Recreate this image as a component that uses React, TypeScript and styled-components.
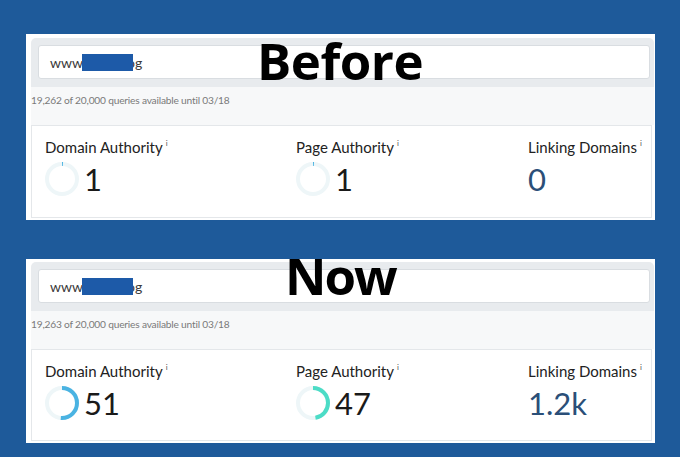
import React from "react";
import styled, { createGlobalStyle } from "styled-components";

const Global = createGlobalStyle`
  html, body { margin: 0; padding: 0; }
  body {
    background: #1e5a9a;
    width: 680px;
    height: 457px;
    overflow: hidden;
    font-family: Lato, "Liberation Sans", sans-serif;
  }
`;

const Page = styled.div`
  display: flex;
  flex-direction: column;
  gap: 39px;
  padding: 34px 25px 0 26px;
`;

const Panel = styled.section<{ $top: number }>`
  position: relative;
  background: #ffffff;
  padding: ${(p) => p.$top}px 1px 2px 5px;
  display: flex;
  flex-direction: column;
`;

const Header = styled.div`
  background: #e8ebee;
  border-radius: 5px 5px 0 0;
  padding: 7px 4px 8px 7px;
`;

const Input = styled.div`
  height: 34px;
  box-sizing: border-box;
  background: #fff;
  border: 1px solid #d9dde1;
  border-radius: 3px;
  display: flex;
  align-items: center;
  padding-left: 11px;
  font-size: 14px;
  color: #3a3a3a;
`;

const Redact = styled.span`
  position: relative;
  z-index: 1;
  display: inline-block;
  width: 51px;
  height: 17px;
  background: #1d5aa8;
  margin-right: -6px;
  margin-left: -1px;
`;

const Strip = styled.div`
  background: #f7f8f9;
  height: 38px;
  box-sizing: border-box;
  padding-top: 6px;
  font-size: 10.2px;
  line-height: 14px;
  letter-spacing: -0.2px;
  color: #7a7a7a;
`;

const Card = styled.div<{ $h: number }>`
  height: ${(p) => p.$h}px;
  box-sizing: border-box;
  border: 1px solid #e4e7ea;
  margin-right: 2px;
  display: grid;
  grid-template-columns: 251px 232px 1fr;
  padding: 8px 0 0 13px;
`;

const Metric = styled.div`
  display: flex;
  flex-direction: column;
  gap: 6px;
`;

const Label = styled.div`
  font-size: 15px;
  color: #222;
  line-height: 18px;
  white-space: nowrap;
  sup {
    font-size: 8px;
    margin-left: 3px;
    color: #555;
    vertical-align: 7px;
  }
`;

const ValueRow = styled.div`
  display: flex;
  align-items: center;
  gap: 5px;
  height: 34px;
`;

const Value = styled.span<{ $color: string }>`
  font-size: 31px;
  font-weight: 400;
  color: ${(p) => p.$color};
  line-height: 34px;
`;

const Overlay = styled.div<{ $left: number; $top: number; $ls: number }>`
  position: absolute;
  left: ${(p) => p.$left}px;
  top: ${(p) => p.$top}px;
  font-family: "Open Sans", sans-serif;
  font-weight: 700;
  font-size: 51px;
  line-height: 1;
  color: #000;
  letter-spacing: ${(p) => p.$ls}px;
  z-index: 2;
`;

function Gauge({ value, color }: { value: number; color: string }) {
  const r = 15;
  const c = 2 * Math.PI * r;
  const len = Math.max(value / 100, 0.01) * c;
  return (
    <svg width="34" height="34" viewBox="0 0 34 34">
      <circle cx="17" cy="17" r={r} fill="none" stroke="#eef6f8" strokeWidth="4" />
      <circle
        cx="17"
        cy="17"
        r={r}
        fill="none"
        stroke={color}
        strokeWidth="4"
        strokeDasharray={`${len} ${c}`}
        transform="rotate(-90 17 17)"
      />
    </svg>
  );
}

type M = { label: string; value: string; gauge?: number; color?: string };

function Block({
  top,
  query,
  title,
  tLeft,
  tTop,
  tLs,
  cardH,
  metrics,
}: {
  top: number;
  query: string;
  title: string;
  tLeft: number;
  tTop: number;
  tLs: number;
  cardH: number;
  metrics: M[];
}) {
  return (
    <Panel $top={top}>
      <Header>
        <Input>
          www<Redact />og
        </Input>
      </Header>
      <Strip>{query}</Strip>
      <Card $h={cardH}>
        {metrics.map((m) => (
          <Metric key={m.label}>
            <Label>
              {m.label}
              <sup>i</sup>
            </Label>
            <ValueRow>
              {m.gauge !== undefined && <Gauge value={m.gauge} color={m.color!} />}
              <Value $color={m.gauge !== undefined ? "#1a1a1a" : "#2b4f78"}>{m.value}</Value>
            </ValueRow>
          </Metric>
        ))}
      </Card>
      <Overlay $left={tLeft} $top={tTop} $ls={tLs}>
        {title}
      </Overlay>
    </Panel>
  );
}

export default function App() {
  return (
    <>
      <Global />
      <Page>
        <Block
          top={4}
          query="19,262 of 20,000 queries available until 03/18"
          title="Before"
          tLeft={231}
          tTop={1}
          tLs={-0.5}
          cardH={93}
          metrics={[
            { label: "Domain Authority", value: "1", gauge: 1, color: "#4ab3e2" },
            { label: "Page Authority", value: "1", gauge: 1, color: "#4ab3e2" },
            { label: "Linking Domains", value: "0" },
          ]}
        />
        <Block
          top={3}
          query="19,263 of 20,000 queries available until 03/18"
          title="Now"
          tLeft={259}
          tTop={-9}
          tLs={-2}
          cardH={92}
          metrics={[
            { label: "Domain Authority", value: "51", gauge: 51, color: "#4ab3e2" },
            { label: "Page Authority", value: "47", gauge: 47, color: "#4cdcc6" },
            { label: "Linking Domains", value: "1.2k" },
          ]}
        />
      </Page>
    </>
  );
}
